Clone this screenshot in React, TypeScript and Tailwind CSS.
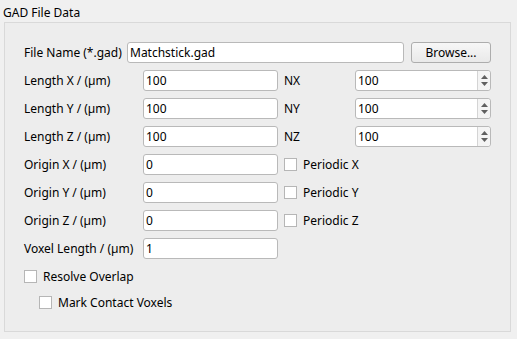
import React from 'react';

const FONT = "font-['Noto_Sans',sans-serif]";

function TextBox({ value, className = '' }: { value: string; className?: string }) {
  return (
    <div
      className={`h-[21px] flex items-center bg-white border border-[#b9b9b9] rounded-[3px] pl-[2px] text-black ${className}`}
    >
      {value}
    </div>
  );
}

function SpinBox({ value }: { value: string }) {
  return (
    <div className="h-[21px] w-[136px] flex bg-white border border-[#b9b9b9] rounded-[3px] text-black">
      <div className="flex-1 flex items-center pl-[2px]">{value}</div>
      <div className="w-[13px] border-l border-[#d4d4d4] flex flex-col items-center justify-center gap-[3px] bg-[#f4f4f4] rounded-r-[3px]">
        <svg width="7" height="4" viewBox="0 0 7 4">
          <path d="M0 4 L3.5 0 L7 4 Z" fill="#606060" />
        </svg>
        <svg width="7" height="4" viewBox="0 0 7 4">
          <path d="M0 0 L3.5 4 L7 0 Z" fill="#606060" />
        </svg>
      </div>
    </div>
  );
}

function CheckBox({ label, className = '' }: { label: string; className?: string }) {
  return (
    <div className={`h-[21px] flex items-center ${className}`}>
      <div className="w-[13px] h-[13px] bg-white border border-[#b6b6b6]" />
      <span className="ml-[6px]">{label}</span>
    </div>
  );
}

const LENGTHS = [
  { label: 'Length X / (µm)', axis: 'NX' },
  { label: 'Length Y / (µm)', axis: 'NY' },
  { label: 'Length Z / (µm)', axis: 'NZ' },
];

const ORIGINS = [
  { label: 'Origin X / (µm)', periodic: 'Periodic X' },
  { label: 'Origin Y / (µm)', periodic: 'Periodic Y' },
  { label: 'Origin Z / (µm)', periodic: 'Periodic Z' },
];

export default function App() {
  return (
    <div className={`w-[517px] h-[339px] bg-[#f0f0f0] text-[12px] leading-[16px] text-black ${FONT}`}>
      <div className="pl-[3px] pt-[5px] h-[22px]">GAD File Data</div>

      <div className="ml-[4px] w-[507px] h-[310px] border border-[#d9d9d9] bg-[#ededed] pt-[19px] pl-[19px]">
        <div className="flex flex-col gap-[7px]">
          {/* file name */}
          <div className="flex items-center h-[21px]">
            <span className="w-[103px]">File Name (*.gad)</span>
            <TextBox value="Matchstick.gad" className="w-[277px]" />
            <button className="ml-[7px] w-[80px] h-[21px] border border-[#adadad] rounded-[3px] bg-gradient-to-b from-[#f7f7f7] to-[#e9e9e9] text-black">
              Browse...
            </button>
          </div>

          {LENGTHS.map((r) => (
            <div key={r.label} className="flex items-center h-[21px]">
              <span className="w-[119px]">{r.label}</span>
              <TextBox value="100" className="w-[135px]" />
              <span className="ml-[6px] w-[71px]">{r.axis}</span>
              <SpinBox value="100" />
            </div>
          ))}

          {ORIGINS.map((r) => (
            <div key={r.label} className="flex items-center h-[21px]">
              <span className="w-[119px]">{r.label}</span>
              <TextBox value="0" className="w-[135px]" />
              <CheckBox label={r.periodic} className="ml-[6px]" />
            </div>
          ))}

          <div className="flex items-center h-[21px]">
            <span className="w-[119px] whitespace-nowrap">Voxel Length / (µm)</span>
            <TextBox value="1" className="w-[135px]" />
          </div>

          <CheckBox label="Resolve Overlap" />
        </div>
        <CheckBox label="Mark Contact Voxels" className="mt-[5px] ml-[15px]" />
      </div>
    </div>
  );
}
